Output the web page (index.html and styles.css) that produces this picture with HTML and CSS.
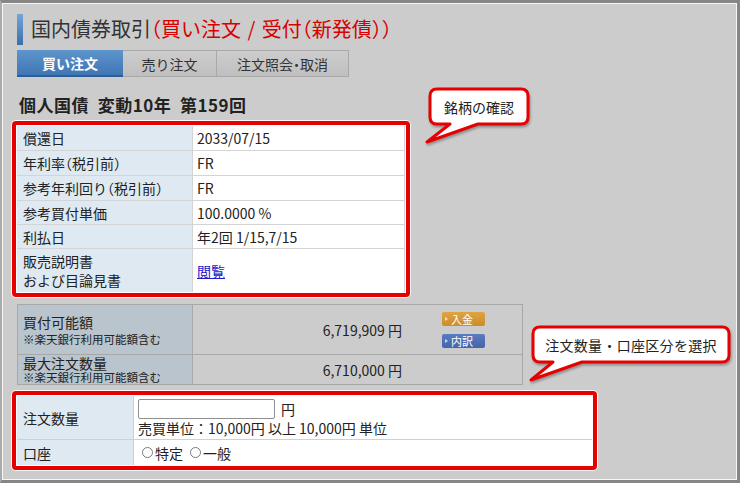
FILE: index.html
```html
<!DOCTYPE html>
<html lang="ja">
<head>
<meta charset="utf-8">
<title>国内債券取引</title>
<link rel="stylesheet" href="styles.css">
</head>
<body>
<div class="frame">
  <div class="title">
    <span class="title-bar"></span>
    <h1 class="title-text">国内債券取引<span class="title-red">（買い注文 <span class="slash">/</span> 受付（新発債））</span></h1>
  </div>
  <div class="tabs">
    <div class="tab tab-1 active">買い注文</div>
    <div class="tab tab-2">売り注文</div>
    <div class="tab tab-3">注文照会・取消</div>
  </div>
  <h2 class="heading">個人国債&nbsp;&nbsp;変動10年&nbsp;&nbsp;第159回</h2>

  <div class="hl hl1">
    <div class="info">
      <div class="lb">償還日</div><div class="vl">2033/07/15</div>
      <div class="lb">年利率（税引前）</div><div class="vl">FR</div>
      <div class="lb">参考年利回り（税引前）</div><div class="vl">FR</div>
      <div class="lb">参考買付単価</div><div class="vl">100.0000 %</div>
      <div class="lb">利払日</div><div class="vl">年2回 1/15,7/15</div>
      <div class="lb lb-2"><span class="lb-line">販売説明書</span><span class="lb-line">および目論見書</span></div><div class="vl"><a class="link" href="#">閲覧</a></div>
    </div>
  </div>

  <div class="avail">
    <div class="alb alb-tall"><span class="alb-main">買付可能額</span><span class="alb-note">※楽天銀行利用可能額含む</span></div>
    <div class="aval">
      <div class="amount">6,719,909 円</div>
      <div class="btns">
        <span class="btn btn-orange"><span class="tri"></span>入金</span>
        <span class="btn btn-blue"><span class="tri"></span>内訳</span>
      </div>
    </div>
    <div class="alb alb-short"><span class="alb-main">最大注文数量</span><span class="alb-note">※楽天銀行利用可能額含む</span></div>
    <div class="aval">
      <div class="amount">6,710,000 円</div>
      <div class="btns"></div>
    </div>
  </div>

  <div class="hl hl2">
    <div class="order">
      <div class="olb">注文数量</div>
      <div class="oval">
        <div class="qty-line"><input class="qty" type="text"><span class="yen">円</span></div>
        <div class="unit">売買単位：10,000円 以上 10,000円 単位</div>
      </div>
      <div class="olb">口座</div>
      <div class="oval oval-radio">
        <label class="radio"><input type="radio" name="acct">特定</label>
        <label class="radio"><input type="radio" name="acct">一般</label>
      </div>
    </div>
  </div>

  <div class="callout c1">
    <svg class="bubble" width="110" height="60" viewBox="0 0 110 60"><path d="M13,3 H97 Q104,3 104,10 V31 Q104,38 97,38 H54 L3,56 L26,38 H13 Q6,38 6,31 V10 Q6,3 13,3 Z"/></svg>
    <span class="callout-text c1-text">銘柄の確認</span>
  </div>
  <div class="callout c2">
    <svg class="bubble" width="208" height="62" viewBox="0 0 208 62"><path d="M13,3 H195 Q202,3 202,10 V31 Q202,38 195,38 H55 L4,56 L26,38 H13 Q6,38 6,31 V10 Q6,3 13,3 Z"/></svg>
    <span class="callout-text c2-text">注文数量・口座区分を選択</span>
  </div>
</div>
</body>
</html>
```

FILE: styles.css
```css
* { box-sizing: border-box; }
html, body { margin: 0; padding: 0; }
body {
  font-family: "Noto Sans CJK JP", "Noto Sans", sans-serif;
  color: #222;
  font-size: 14px;
  background: #cccccc;
}
.frame {
  position: relative;
  width: 740px;
  height: 483px;
  background: #cccccc;
  border: 3px solid #868686;
  border-left: 2px solid #ababab;
  box-shadow: inset 0 0 0 1px #f6f6f6;
  padding: 11px 0 0 10px;
  overflow: hidden;
}

/* title */
.title { display: flex; align-items: center; height: 30px; margin-left: 5px; gap: 8px; }
.title-bar { width: 6px; height: 31px; background: linear-gradient(#75a5d6, #3a6dad); }
.title-text {
  margin: 0; font-size: 20px; font-weight: normal; color: #333;
  line-height: 30px; white-space: nowrap; font-feature-settings: "halt";
}
.title-red { color: #d80000; }
.slash { padding: 0 2px; }

/* tabs */
.tabs { display: flex; margin: 6px 0 0 5px; height: 27px; }
.tab {
  height: 27px; display: flex; align-items: center; justify-content: center;
  font-size: 14px; color: #333; background: linear-gradient(#cdcdcd, #bfbfbf);
  border: 1px solid #a9a9a9; border-left: none; font-feature-settings: "halt";
}
.tab-1 { width: 106px; }
.tab-2 { width: 94px; }
.tab-3 { width: 132px; }
.tab.active {
  background: linear-gradient(#5e95cc, #3f76b4);
  color: #fff; font-weight: bold; border: none; border-bottom: 2px solid #2b5d96;
}

/* heading */
.heading { margin: 18px 0 0 7px; font-size: 17px; line-height: 20px; font-weight: bold; color: #222; letter-spacing: 0.5px; }

/* highlighted boxes */
.hl {
  width: fit-content; margin-top: 6px; border: 4px solid #e60000; border-radius: 4px;
  padding: 1px; background: #fff; box-shadow: 0 0 0 1px rgba(255,255,255,0.85);
}

.info {
  display: grid;
  grid-template-columns: 175px 211px;
  grid-template-rows: 24px 24px 24px 23px 23px 43px;
  gap: 1px;
  background: #d4d4d4;
  border-right: 1px solid #d4d4d4;
}
.lb {
  background: #dfe9f1; display: flex; align-items: center; padding-left: 6px;
  font-size: 14px; color: #222; font-feature-settings: "halt"; white-space: nowrap;
}
.lb-2 { flex-direction: column; align-items: flex-start; justify-content: center; }
.lb-line { line-height: 19px; }
.vl { background: #fff; display: flex; align-items: center; padding-left: 4px; font-size: 14px; color: #222; }
.link { color: #1a1acc; text-decoration: underline; }

/* availability table (dimmed) */
.avail {
  margin: 7px 0 0 5px;
  width: 506px;
  display: grid;
  grid-template-columns: 174px 1fr;
  grid-template-rows: 49px 29px;
  gap: 1px;
  background: #a8a8a8;
  border: 1px solid #a8a8a8;
}
.alb { background: #b9c4cc; display: flex; flex-direction: column; justify-content: center; padding-left: 5px; color: #222; }
.alb-main { font-size: 14px; }
.alb-note { font-size: 11.5px; white-space: nowrap; }
.alb-tall .alb-main { line-height: 18px; }
.alb-tall .alb-note { line-height: 16px; }
.alb-short .alb-main { line-height: 15px; }
.alb-short .alb-note { line-height: 13px; }
.aval { background: #cccccc; display: grid; grid-template-columns: 1fr 117px; }
.amount { display: flex; align-items: center; justify-content: flex-end; padding-right: 3px; font-size: 14px; color: #222; }
.btns { display: flex; flex-direction: column; align-items: center; justify-content: center; gap: 8px; }
.btn {
  width: 43px; height: 14px; border-radius: 2px; display: flex; align-items: center;
  padding-left: 3px; font-size: 11px; line-height: 14px; color: #fff; gap: 3px;
}
.btn-orange { background: linear-gradient(#dea443, #cc8c27); }
.btn-blue { background: linear-gradient(#5a7cc0, #4564ab); }
.tri {
  width: 0; height: 0; border-left: 3px solid rgba(255,255,255,0.7);
  border-top: 2.5px solid transparent; border-bottom: 2.5px solid transparent;
}

/* order table */
.order {
  display: grid;
  grid-template-columns: 116px 458px;
  grid-template-rows: 43px 25px;
  gap: 1px;
  background: #d0d0d0;
}
.olb { background: #dfe9f1; display: flex; align-items: center; padding-left: 6px; font-size: 14px; color: #222; }
.oval { background: #fff; padding: 3px 4px 0 4px; font-size: 14px; color: #222; }
.qty-line { display: flex; align-items: center; height: 20px; }
.qty { width: 137px; height: 20px; border: 1px solid #8f8f8f; border-radius: 2px; margin: 0; padding: 0 3px; background: #fff; }
.yen { margin-left: 6px; }
.unit { line-height: 19px; white-space: nowrap; }
.oval-radio { padding: 0 0 0 8px; display: flex; align-items: center; gap: 7px; }
.radio { display: flex; align-items: center; gap: 2px; }
.radio input {
  appearance: none; -webkit-appearance: none; width: 11px; height: 11px; margin: 0;
  border: 1px solid #7a7a7a; border-radius: 50%; background: #fff;
}

/* callouts */
.callout { position: absolute; z-index: 5; }
.c1 { left: 422px; top: 83px; width: 110px; height: 60px; }
.c2 { left: 525px; top: 321px; width: 208px; height: 62px; }
.bubble { position: absolute; left: 0; top: 0; overflow: visible; filter: drop-shadow(1px 2px 1px rgba(0,0,0,0.3)); }
.bubble path { fill: #fff; stroke: #e60000; stroke-width: 3; stroke-linejoin: round; }
.callout-text {
  position: absolute; left: 6px; top: 3px; height: 35px;
  display: flex; align-items: center; justify-content: center;
  font-size: 14px; color: #222; white-space: nowrap;
}
.c1-text { width: 98px; }
.c2-text { width: 196px; letter-spacing: 0.3px; }
```
